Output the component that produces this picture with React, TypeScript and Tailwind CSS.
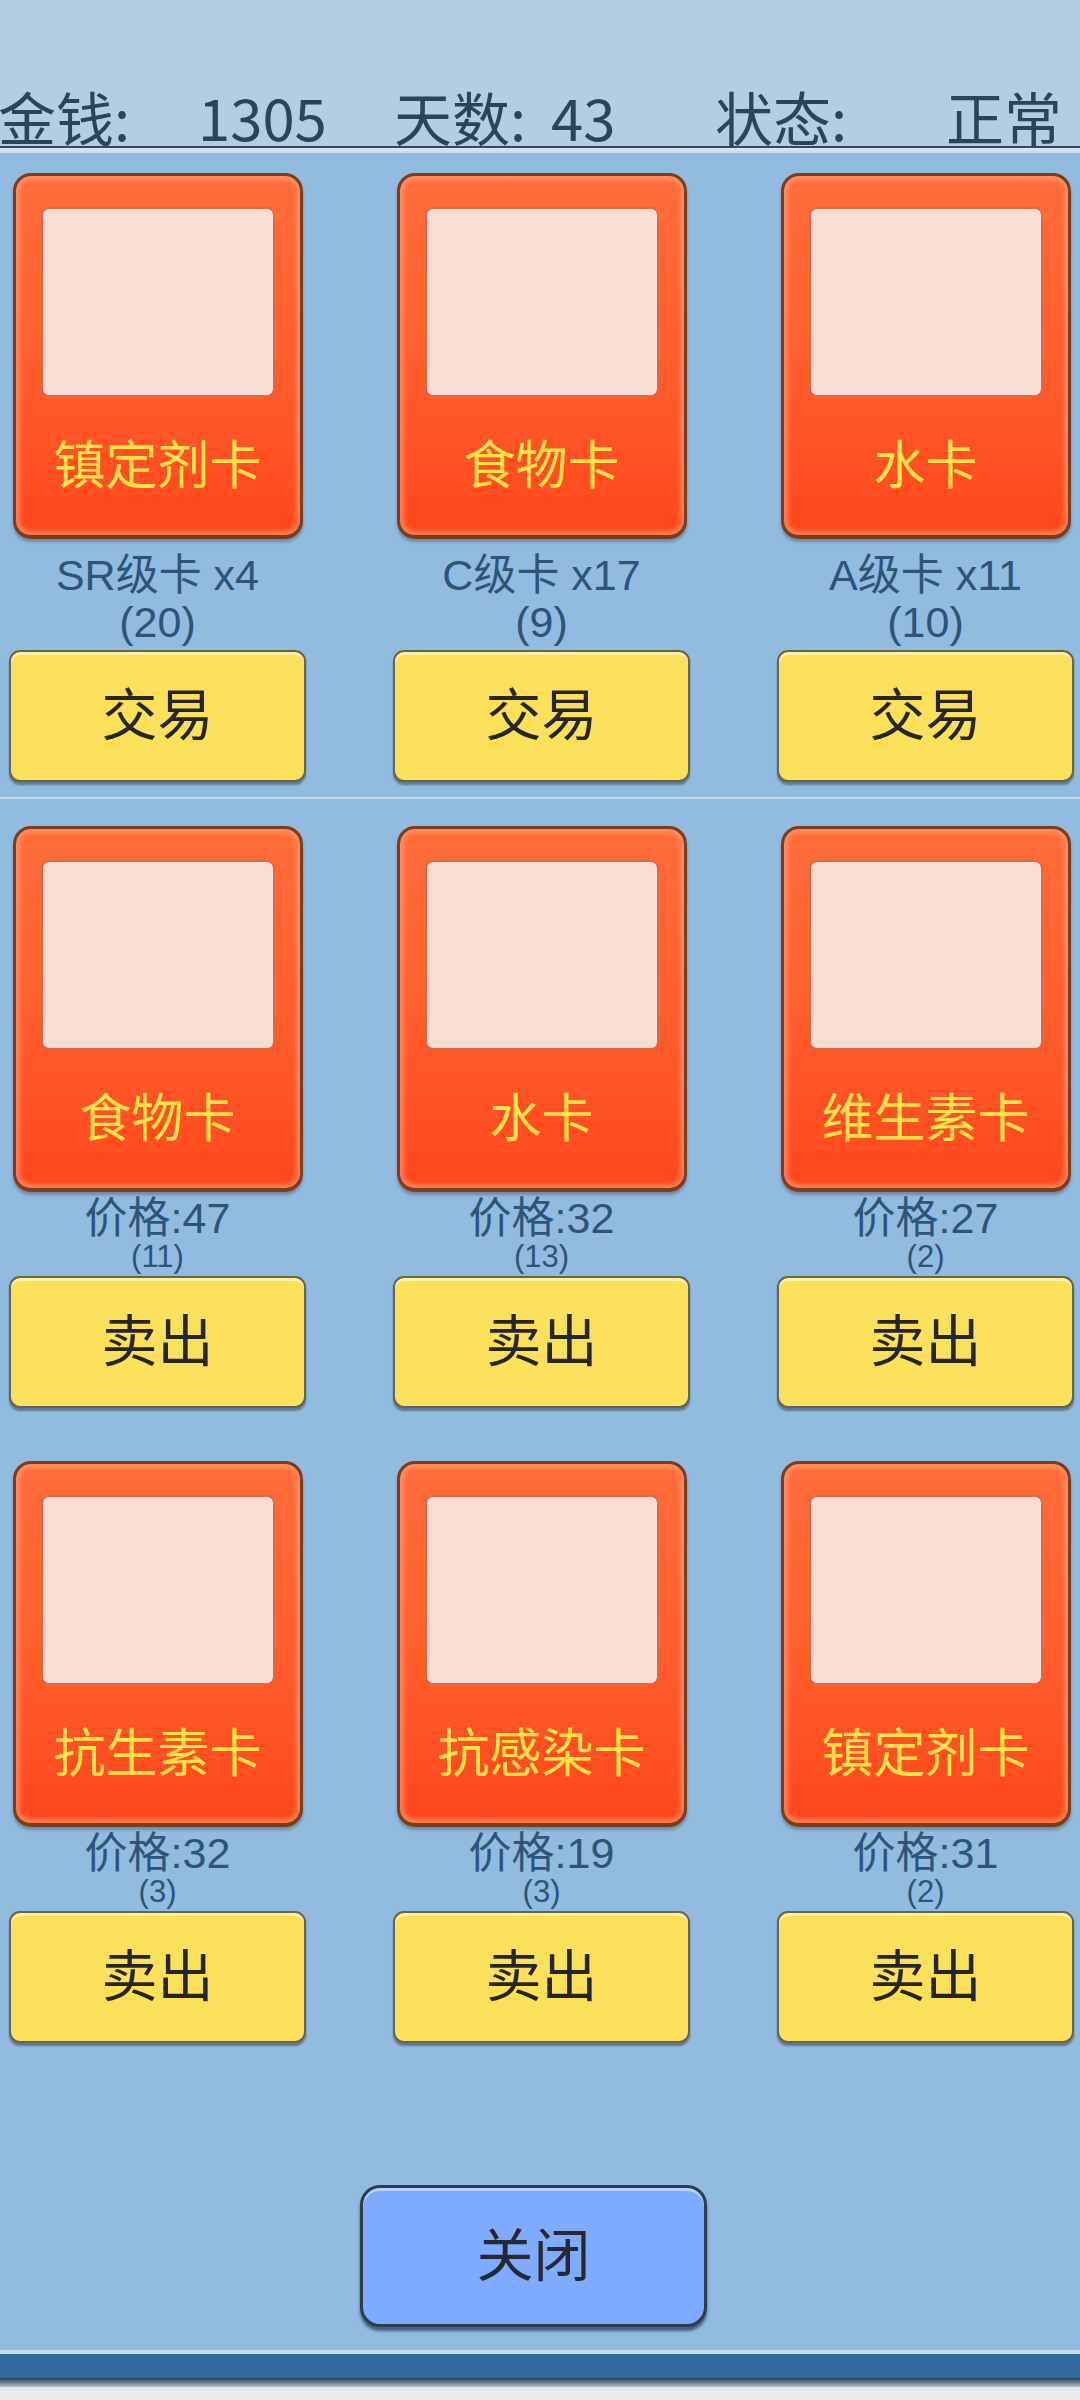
import React from 'react';

const CJK = "font-['Liberation_Sans','Noto_Sans_CJK_SC',sans-serif]";

const tradeCards = [
  { name: '镇定剂卡', grade: 'SR级卡 x4', count: 20 },
  { name: '食物卡', grade: 'C级卡 x17', count: 9 },
  { name: '水卡', grade: 'A级卡 x11', count: 10 },
];

const sellRows = [
  [
    { name: '食物卡', price: 47, count: 11 },
    { name: '水卡', price: 32, count: 13 },
    { name: '维生素卡', price: 27, count: 2 },
  ],
  [
    { name: '抗生素卡', price: 32, count: 3 },
    { name: '抗感染卡', price: 19, count: 3 },
    { name: '镇定剂卡', price: 31, count: 2 },
  ],
];

function Card({ name }: { name: string }) {
  return (
    <div className="mx-auto w-[290px] h-[366px] rounded-[18px] border-[3px] border-[#7a3d1e] border-b-4 bg-linear-to-b from-[#ff6d3a] via-[#ff5e2e] to-[#ff471a] shadow-[inset_0_0_4px_4px_rgba(255,170,130,0.55),0_3px_3px_rgba(0,0,0,0.25)] px-[25px] pt-[31px] flex flex-col items-center">
      <div className="w-full h-[190px] rounded-[8px] border-2 border-[#e2663f] bg-[#f7dcd4] shadow-[inset_0_0_2px_rgba(255,255,255,0.8)]" />
      <div className="mt-[43px] text-[52px] leading-none text-[#ffe24b] whitespace-nowrap">{name}</div>
    </div>
  );
}

function YellowButton({ label }: { label: string }) {
  return (
    <button className="w-full h-[132px] rounded-[11px] border-2 border-[#66654e] bg-[#fbe05b] shadow-[inset_0_3px_0_#fff2a3,0_3px_2px_rgba(0,0,0,0.35)] text-[56px] leading-none text-[#262626]">
      {label}
    </button>
  );
}

export default function App() {
  return (
    <div className={`w-[1080px] h-[2400px] flex flex-col bg-[#92bbe0] ${CJK}`}>
      {/* top status bar */}
      <div className="h-[146px] bg-[#b4cee1] flex items-end text-[58px] leading-none text-[#2a4557] font-['Noto_Sans_CJK_SC',sans-serif] pb-[1px]">
        <span className="w-[200px] -ml-[2px]">金钱:</span>
        <span className="w-[196px]">1305</span>
        <span className="w-[157px]">天数:</span>
        <span className="w-[164px]">43</span>
        <span className="w-[231px]">状态:</span>
        <span>正常</span>
      </div>
      <div className="h-[2px] bg-[#34495a]" />
      <div className="h-[5px] bg-linear-to-b from-[#dce9f5] to-[#c3d9ee]" />

      {/* panel */}
      <div className="flex-1 flex flex-col pt-[20px]">
        <div className="grid grid-cols-[297px_297px_297px] gap-x-[87px] pl-[9px]">
          {tradeCards.map((c) => (
            <div key={c.name + c.grade} className="flex flex-col">
              <Card name={c.name} />
              <div className="h-[62px] flex items-end justify-center text-[43px] leading-none text-[#2e5478] pb-[4px]">{c.grade}</div>
              <div className="h-[49px] flex items-start justify-center text-[43px] leading-none text-[#2e5478]">({c.count})</div>
              <YellowButton label="交易" />
            </div>
          ))}
        </div>

        <div className="mt-[15px] h-[2px] bg-[#c3d9ee]" />

        <div className="mt-[27px] flex flex-col gap-[53px]">
          {sellRows.map((row, i) => (
            <div key={i} className="grid grid-cols-[297px_297px_297px] gap-x-[87px] pl-[9px]">
              {row.map((c) => (
                <div key={c.name} className="flex flex-col">
                  <Card name={c.name} />
                  <div className="h-[46px] flex items-center justify-center text-[43px] leading-none text-[#2e5478] pt-[6px]">价格:{c.price}</div>
                  <div className="h-[38px] flex items-center justify-center text-[31px] leading-none text-[#2e5478] pb-[2px]">({c.count})</div>
                  <YellowButton label="卖出" />
                </div>
              ))}
            </div>
          ))}
        </div>

        <div className="mt-[142px] ml-[360px] w-[347px] h-[142px] rounded-[20px] border-[3px] border-[#2c3d4f] bg-[#7eaaff] shadow-[inset_0_3px_0_#b7d0ff,0_4px_3px_rgba(20,35,55,0.6)] flex items-center justify-center text-[57px] leading-none text-[#262a30]">
          关闭
        </div>
      </div>

      {/* bottom bar */}
      <div className="h-[4px] bg-[#c6dcef]" />
      <div className="h-[24px] bg-[#33699b]" />
      <div className="h-[9px] bg-linear-to-b from-[#253f57] to-[#b9c2ca]" />
      <div className="h-[13px] bg-[#e8ebee]" />
    </div>
  );
}
